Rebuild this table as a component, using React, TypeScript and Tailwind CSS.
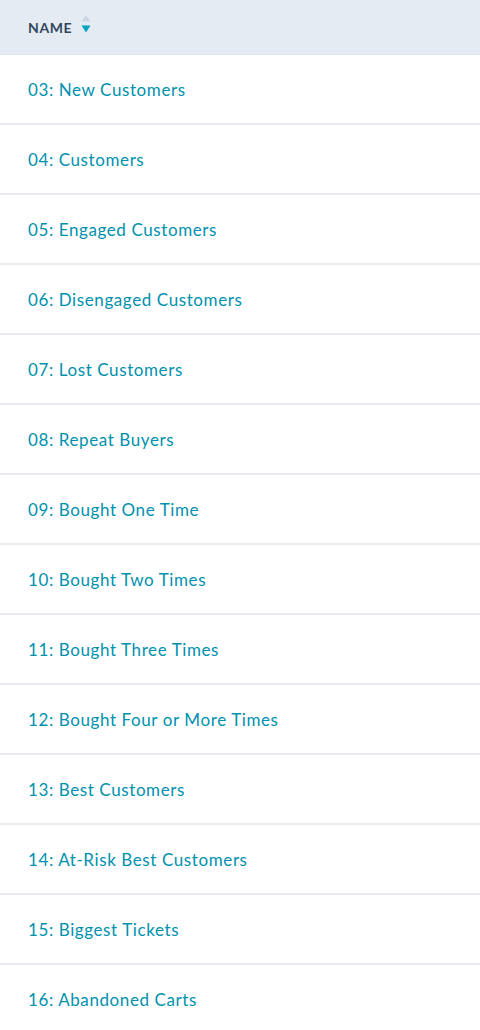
const rows = [
  "03: New Customers",
  "04: Customers",
  "05: Engaged Customers",
  "06: Disengaged Customers",
  "07: Lost Customers",
  "08: Repeat Buyers",
  "09: Bought One Time",
  "10: Bought Two Times",
  "11: Bought Three Times",
  "12: Bought Four or More Times",
  "13: Best Customers",
  "14: At-Risk Best Customers",
  "15: Biggest Tickets",
  "16: Abandoned Carts",
];

export default function App() {
  return (
    <div className="w-[480px] h-[1030px] overflow-hidden bg-white font-['Lato',sans-serif]">
      {/* header */}
      <div className="h-[55px] bg-[#e5ebf2] border-b border-[#dfe3eb] flex items-center pl-[28px] gap-[9px]">
        <span className="text-[14px] font-bold text-[#33475b] tracking-[0.6px] pt-[1px]">NAME</span>
        <svg width="10" height="18" viewBox="0 0 10 18" className="mt-[-7px]">
          <path d="M5 0 L9.5 6.5 L0.5 6.5 Z" fill="#cbd6e2" />
          <path d="M0.5 10.5 L9.5 10.5 L5 17.5 Z" fill="#00a4bd" />
        </svg>
      </div>

      {/* rows */}
      {rows.map((r) => (
        <div
          key={r}
          className="h-[70px] border-b-2 border-[#e8ecf1] flex items-center pl-[28px] pt-[2px]"
        >
          <span className="text-[17px] text-[#0091ae] tracking-[0.6px]">{r}</span>
        </div>
      ))}
    </div>
  );
}
